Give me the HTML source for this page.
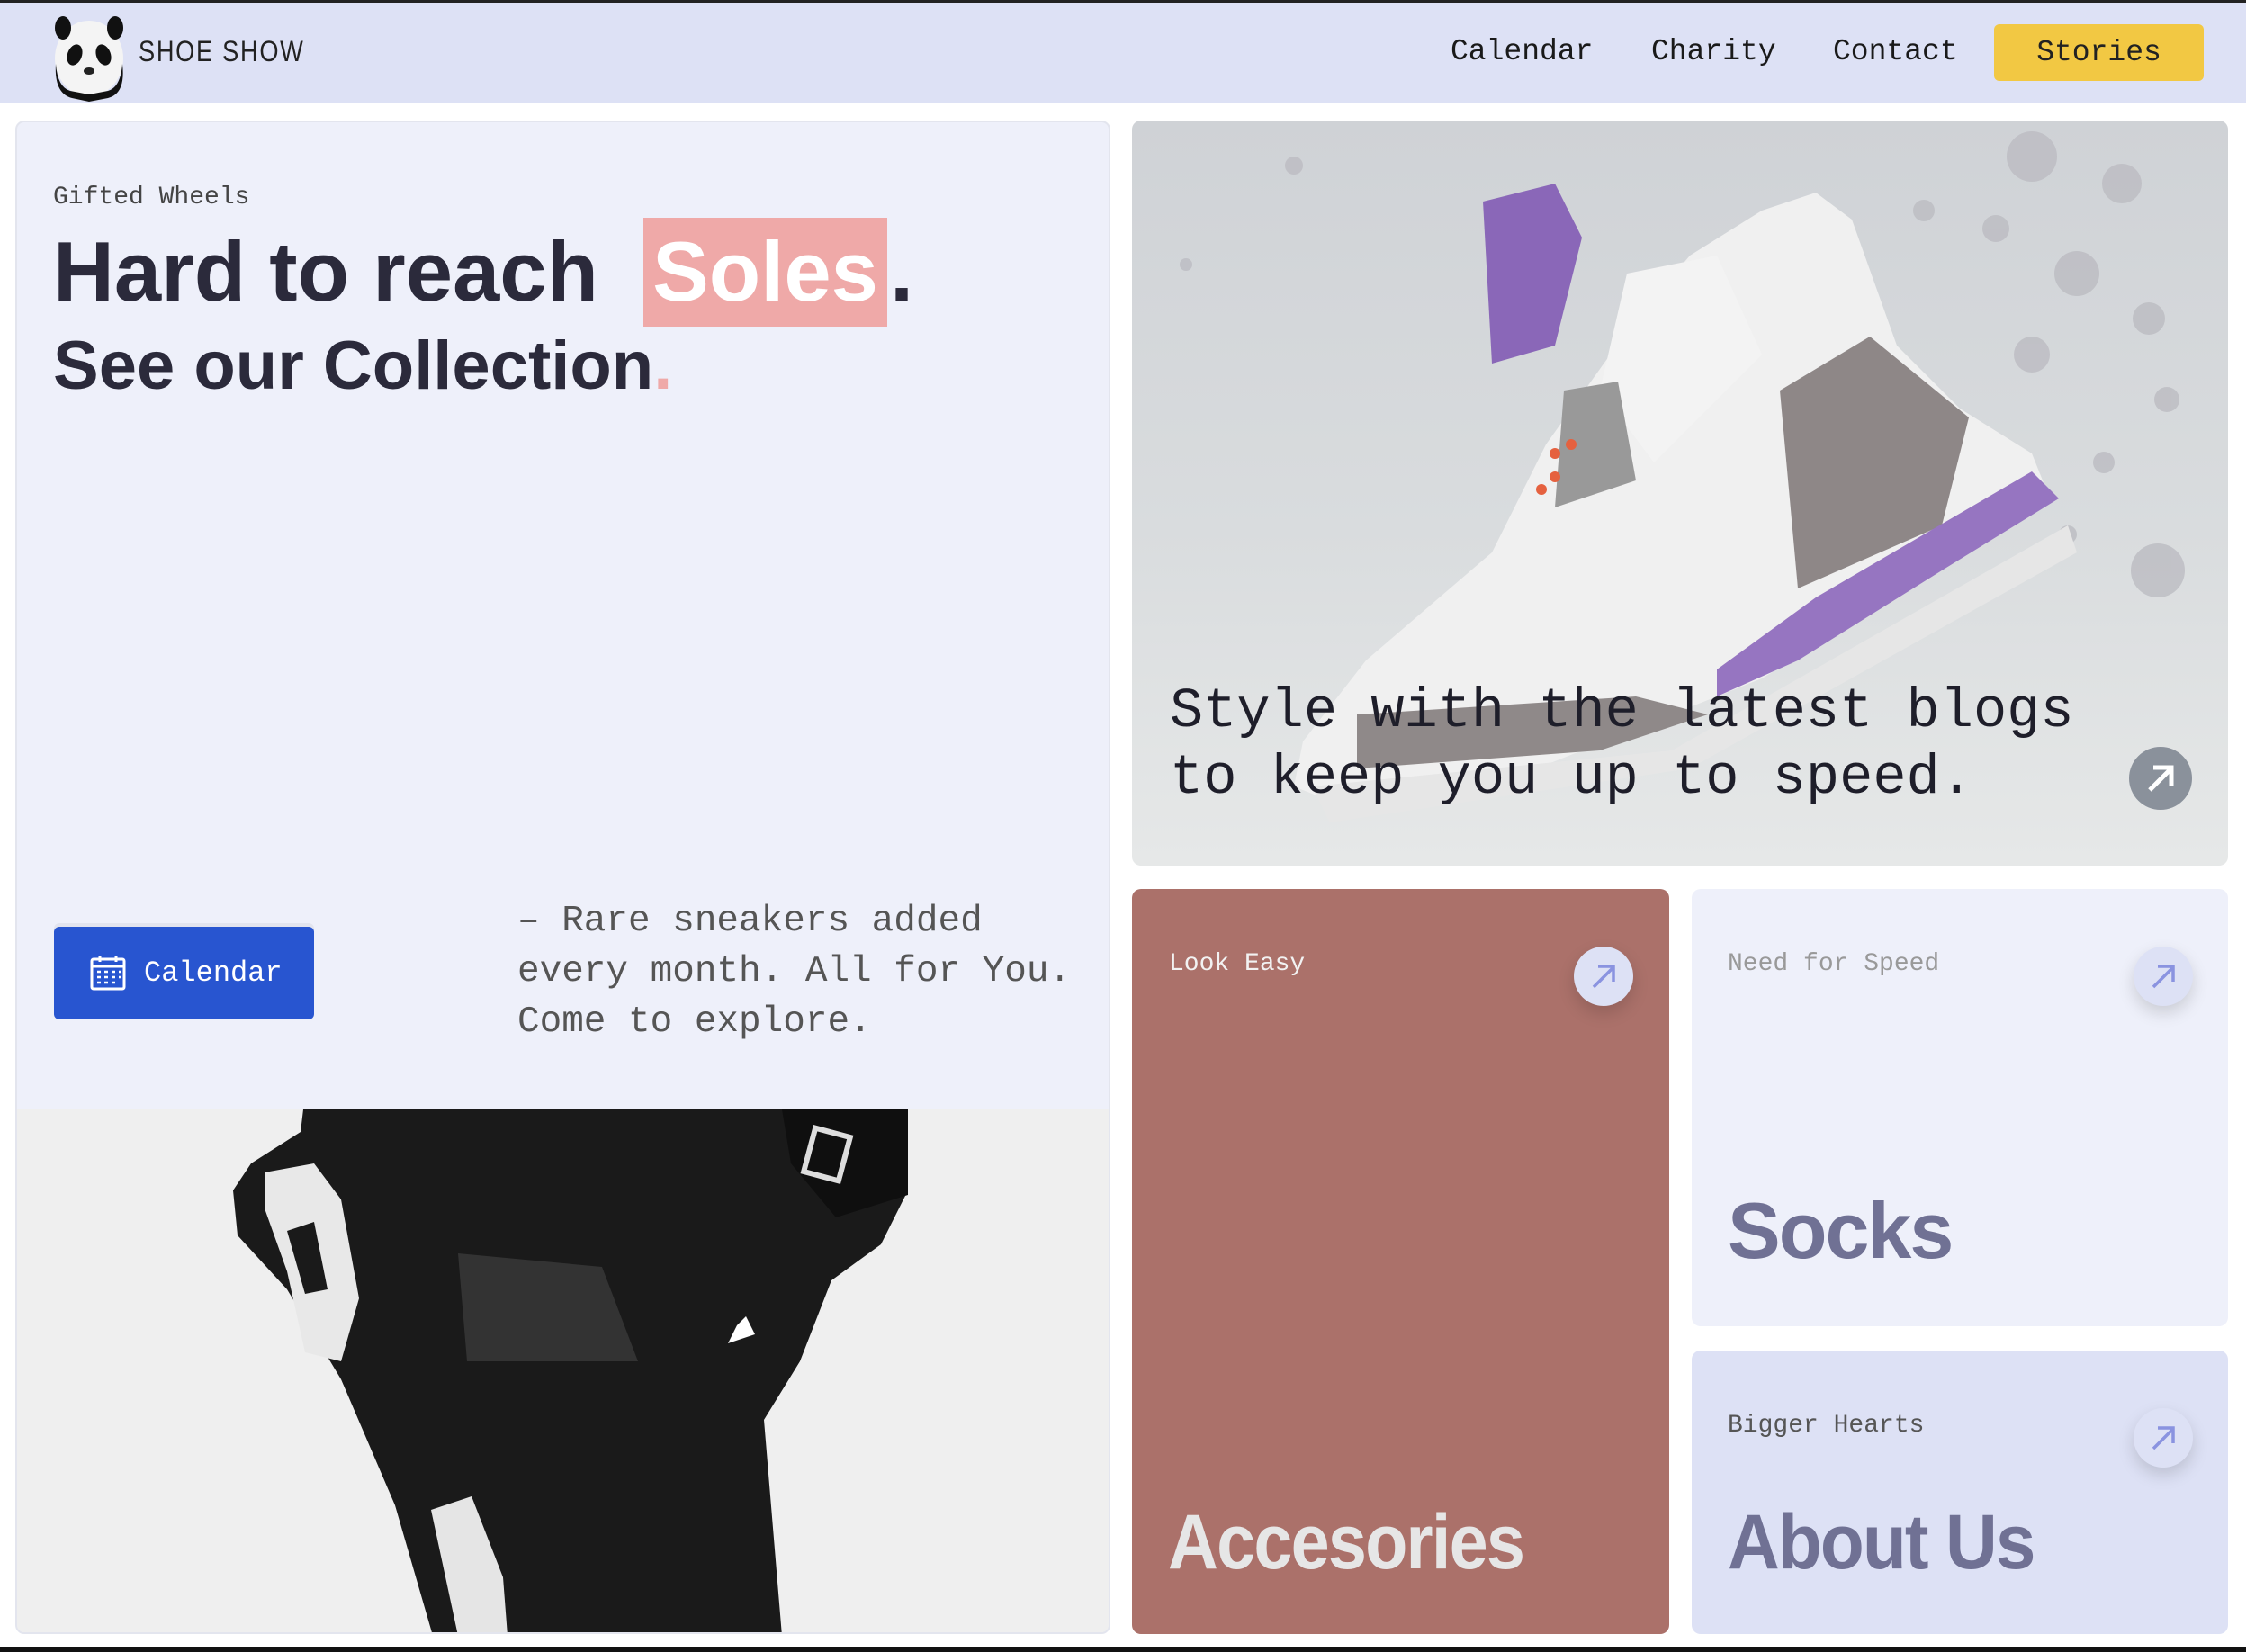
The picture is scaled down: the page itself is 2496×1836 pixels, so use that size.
<!DOCTYPE html>
<html><head><meta charset="utf-8"><style>
*{margin:0;padding:0;box-sizing:border-box}
body{width:2496px;height:1836px;background:#fff;position:relative;overflow:hidden;font-family:"Liberation Mono",monospace;color:#1e1e28}
.abs{position:absolute}
.nav{left:0;top:0;width:2496px;height:115px;background:#dde1f5;border-top:3px solid #222}
.hv{font-family:"Liberation Sans",sans-serif;font-weight:900;color:#2b2a3b;white-space:nowrap}
.card{border-radius:10px;overflow:hidden}
.circ{border-radius:50%;background:#dde1f5;box-shadow:0 8px 18px rgba(0,0,0,.15)}
</style></head><body>
<div class="abs nav">
  <svg class="abs" style="left:50px;top:6px" width="98" height="104" viewBox="0 0 98 104">
    <ellipse cx="49" cy="56" rx="38" ry="42" fill="#f4f4f4"/>
    <path d="M12 62 Q10 95 30 100 L49 104 L70 100 Q90 95 86 62 Q84 88 70 92 L49 96 L28 92 Q14 88 12 62Z" fill="#111"/>
    <ellipse cx="20" cy="22" rx="9" ry="13" fill="#111"/>
    <ellipse cx="78" cy="22" rx="9" ry="13" fill="#111"/>
    <ellipse cx="33" cy="52" rx="8" ry="12" fill="#111" transform="rotate(20 33 52)"/>
    <ellipse cx="65" cy="52" rx="8" ry="12" fill="#111" transform="rotate(-20 65 52)"/>
    <ellipse cx="49" cy="70" rx="6" ry="4" fill="#222"/>
  </svg>
  <div class="abs" style="left:154px;top:36px;font-size:32px;font-family:'Liberation Sans',sans-serif;transform:scaleX(.85);transform-origin:left;letter-spacing:2px;color:#222">SHOE SHOW</div>
  <div class="abs" style="left:1612px;top:36px;font-size:33px;color:#1a1a1a">Calendar</div>
  <div class="abs" style="left:1835px;top:36px;font-size:33px;color:#1a1a1a">Charity</div>
  <div class="abs" style="left:2037px;top:36px;font-size:33px;color:#1a1a1a">Contact</div>
  <div class="abs" style="left:2216px;top:24px;width:233px;height:63px;background:#f2c843;border-radius:6px;font-size:33px;color:#222;text-align:center;line-height:63px">Stories</div>
</div>

<div class="abs card" style="left:17px;top:134px;width:1217px;height:1682px;background:#eef0fa;border:2px solid #e3e5ee">
  <div class="abs" style="left:40px;top:68px;font-size:28px;color:#444">Gifted Wheels</div>
  <div class="abs" style="left:696px;top:106px;width:271px;height:121px;background:#efa9a8"></div>
  <div class="abs hv" style="left:40px;top:105px;font-size:94px;line-height:1.3">Hard to reach</div>
  <div class="abs hv" style="left:696px;top:105px;width:271px;text-align:center;font-size:94px;line-height:1.3;color:#fff">Soles</div>
  <div class="abs hv" style="left:970px;top:105px;font-size:94px;line-height:1.3">.</div>
  <div class="abs hv" style="left:40px;top:222px;font-size:76px;line-height:1.3">See our Collection<span style="color:#efa9a8">.</span></div>
  <div class="abs" style="left:41px;top:894px;width:289px;height:103px;background:#2855d0;border-radius:6px;box-shadow:0 -4px 0 #e2e4ee;color:#fff;font-size:32px;line-height:103px;padding-left:100px">Calendar</div>
  <svg class="abs" style="left:80px;top:924px" width="42" height="42" viewBox="0 0 42 42" fill="none" stroke="#fff" stroke-width="3"><rect x="3" y="6" width="36" height="33" rx="2"/><line x1="3" y1="14" x2="39" y2="14"/><line x1="12" y1="2" x2="12" y2="9"/><line x1="30" y1="2" x2="30" y2="9"/><g stroke-width="2.5"><path d="M9 20h4M17 20h4M25 20h4M33 20h2M9 26h4M17 26h4M25 26h4M33 26h2M9 32h4M17 32h4M25 32h4"/></g></svg>
  <div class="abs" style="left:556px;top:860px;font-size:41px;line-height:56px;color:#555">– Rare sneakers added<br>every month. All for You.<br>Come to explore.</div>
  <div class="abs" style="left:0;top:1097px;width:1217px;height:585px;background:#efefef">
    <svg width="1217" height="585" viewBox="0 0 1217 585">
      <path d="M318 0 L987 0 L990 90 L960 150 L905 190 L870 280 L830 345 L850 585 L462 585 L420 440 L360 300 L300 200 L245 140 L240 90 L260 60 L315 25Z" fill="#1a1a1a"/>
      <path d="M275 70 L330 60 L360 100 L380 210 L360 280 L320 270 L300 180 L275 110Z" fill="#e8e8e8"/>
      <path d="M300 135 L330 125 L345 200 L320 205Z" fill="#1a1a1a"/>
      <path d="M460 445 L505 430 L540 520 L545 585 L490 585Z" fill="#e5e5e5"/>
      <path d="M490 160 L650 175 L690 280 L500 280Z" fill="#333"/>
      <path d="M850 0 L990 0 L990 95 L910 120 L860 60Z" fill="#0f0f0f"/>
      <rect x="880" y="25" width="40" height="50" fill="none" stroke="#ddd" stroke-width="6" transform="rotate(15 900 50)"/>
      <path d="M810 230 L820 250 L790 260 L800 240Z" fill="#fff"/>
    </svg>
  </div>
</div>

<div class="abs card" style="left:1258px;top:134px;width:1218px;height:828px;background:linear-gradient(180deg,#cfd2d6 0%,#d9dcde 55%,#e6e8e8 100%)">
  <svg class="abs" style="left:0;top:0" width="1218" height="828" viewBox="0 0 1218 828">
    <g fill="#bcbcc2" opacity=".8"><circle cx="1000" cy="40" r="28"/><circle cx="1100" cy="70" r="22"/><circle cx="960" cy="120" r="15"/><circle cx="1050" cy="170" r="25"/><circle cx="1130" cy="220" r="18"/><circle cx="1000" cy="260" r="20"/><circle cx="1150" cy="310" r="14"/><circle cx="1080" cy="380" r="12"/><circle cx="1140" cy="500" r="30"/><circle cx="1040" cy="460" r="10"/><circle cx="880" cy="100" r="12"/><circle cx="180" cy="50" r="10"/><circle cx="60" cy="160" r="7"/></g>
    <path d="M190 690 L260 600 L400 480 L460 360 L560 220 L620 150 L700 100 L760 80 L800 110 L850 250 L920 320 L1000 370 L1020 420 L900 500 L700 620 L450 720 L230 760 L180 740Z" fill="#f0f0f0"/>
    <path d="M390 90 L470 70 L500 130 L470 250 L400 270Z" fill="#8a67b8"/>
    <path d="M550 170 L650 150 L700 260 L580 380 L520 300Z" fill="#f3f3f3"/>
    <path d="M480 300 L540 290 L560 400 L470 430Z" fill="#999"/>
    <path d="M720 300 L820 240 L930 330 L900 450 L740 520Z" fill="#8e8787"/>
    <path d="M760 530 L1000 390 L1030 420 L900 500 L740 600 L650 640 L650 610Z" fill="#9675c1"/>
    <path d="M250 660 L560 640 L640 660 L520 700 L250 720Z" fill="#8f8989"/>
    <path d="M200 740 L600 700 L1040 450 L1050 480 L620 720 L220 780Z" fill="#e6e6e6"/>
    <g fill="#e5613f"><circle cx="470" cy="370" r="6"/><circle cx="488" cy="360" r="6"/><circle cx="470" cy="396" r="6"/><circle cx="455" cy="410" r="6"/></g>
  </svg>
  <div class="abs" style="left:42px;top:620px;font-size:62px;line-height:74px;color:#1e1e2a;white-space:nowrap">Style with the latest blogs<br>to keep you up to speed.</div>
  <div class="abs" style="left:1108px;top:696px;width:70px;height:70px;border-radius:50%;background:#8a919b"></div>
  <svg class="abs" style="left:1108px;top:696px" width="70" height="70" viewBox="0 0 70 70" fill="none" stroke="#fff" stroke-width="5"><path d="M23 48 L47 24 M27 23 H47 V43"/></svg>
</div>

<div class="abs card" style="left:1258px;top:988px;width:597px;height:828px;background:#ab716a">
  <div class="abs" style="left:41px;top:68px;font-size:28px;color:#f2f2f2">Look Easy</div>
  <div class="abs circ" style="left:491px;top:64px;width:66px;height:66px"></div>
  <svg class="abs" style="left:491px;top:64px" width="66" height="66" viewBox="0 0 66 66" fill="none" stroke="#8a93e0" stroke-width="3.5"><path d="M22 45 L44 23 M27 22 H44 V39"/></svg>
  <div class="abs hv" style="left:40px;top:683px;font-size:86px;line-height:1;color:#e6e6e6;letter-spacing:-2px;transform:scaleX(.9);transform-origin:left">Accesories</div>
</div>

<div class="abs card" style="left:1880px;top:988px;width:596px;height:486px;background:#eef0fa">
  <div class="abs" style="left:40px;top:68px;font-size:28px;color:#999">Need for Speed</div>
  <div class="abs circ" style="left:491px;top:64px;width:66px;height:66px"></div>
  <svg class="abs" style="left:491px;top:64px" width="66" height="66" viewBox="0 0 66 66" fill="none" stroke="#8a93e0" stroke-width="3.5"><path d="M22 45 L44 23 M27 22 H44 V39"/></svg>
  <div class="abs hv" style="left:40px;top:336px;font-size:88px;line-height:1;color:#707194;letter-spacing:-2px">Socks</div>
</div>

<div class="abs card" style="left:1880px;top:1501px;width:596px;height:315px;background:#dde1f5">
  <div class="abs" style="left:40px;top:68px;font-size:28px;color:#555">Bigger Hearts</div>
  <div class="abs circ" style="left:491px;top:64px;width:66px;height:66px"></div>
  <svg class="abs" style="left:491px;top:64px" width="66" height="66" viewBox="0 0 66 66" fill="none" stroke="#8a93e0" stroke-width="3.5"><path d="M22 45 L44 23 M27 22 H44 V39"/></svg>
  <div class="abs hv" style="left:40px;top:170px;font-size:86px;line-height:1;color:#707194;letter-spacing:-2px;transform:scaleX(.93);transform-origin:left">About Us</div>
</div>
<div class="abs" style="left:0;top:1830px;width:2496px;height:6px;background:#111"></div>
</body></html>
